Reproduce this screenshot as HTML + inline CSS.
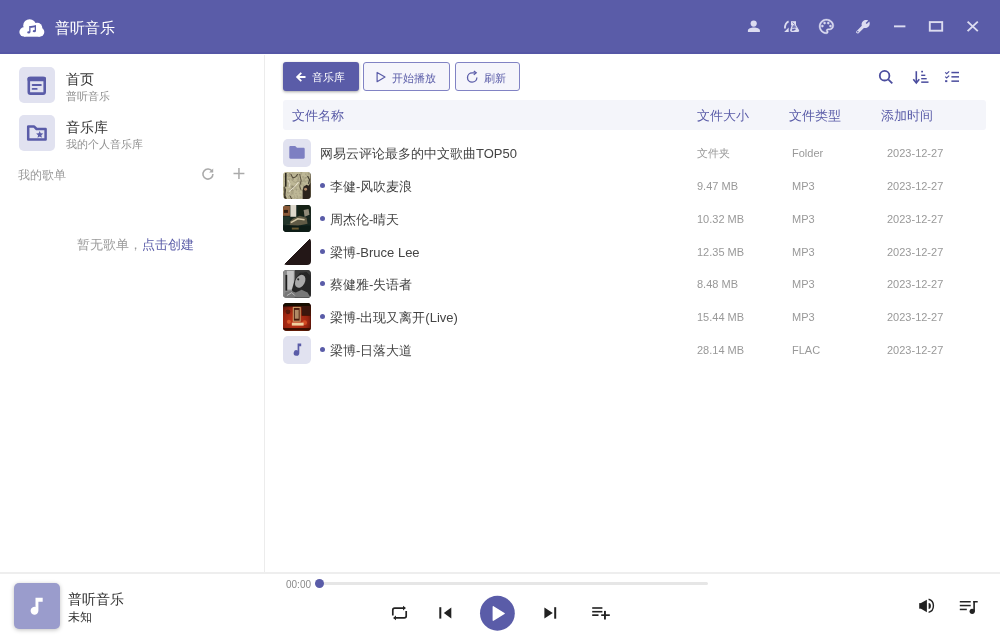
<!DOCTYPE html>
<html><head><meta charset="utf-8">
<style>
*{box-sizing:border-box;margin:0;padding:0}
.a,.th,.tt,.m,.btn{will-change:transform}
html,body{width:1000px;height:639px;overflow:hidden;background:#fff;font-family:"Liberation Sans",sans-serif;color:#333}
.a{position:absolute;white-space:nowrap}
#top{position:absolute;left:0;top:0;width:1000px;height:54px;background:#5a5ca8;box-shadow:inset 0 -2px 0 #5557a6}
#side{position:absolute;left:0;top:55px;width:265px;height:517px;border-right:1px solid #ececec}
#bar{position:absolute;left:0;top:572px;width:1000px;height:67px;border-top:2px solid #eeeeee;background:#fff}
.navbox{position:absolute;left:19px;width:36px;height:36px;border-radius:5px;background:#e1e2f0}
.btn{position:absolute;top:62px;height:29px;border-radius:3px;font-size:11px;line-height:30px}
.b1{left:283px;width:76px;background:#5a5ca8;color:#fff;box-shadow:0 1px 3px rgba(0,0,0,.35)}
.b2{border:1px solid #8183c4;background:#f5f5fb;color:#5a5ca8}
#thead{position:absolute;left:283px;top:100px;width:703px;height:30px;background:#f4f5fa;border-radius:3px}
.th{position:absolute;top:1px;line-height:30px;font-size:13px;color:#5a5ca8}
.row{position:absolute;left:283px;width:703px;height:33px}
.thumb{position:absolute;left:0;top:0;width:27.5px;height:27.5px;border-radius:4px;overflow:hidden}
.thumb svg{display:block;width:27.5px;height:27.5px}
.dot{position:absolute;left:37px;top:11px;width:5px;height:5px;border-radius:50%;background:#5a5ca8}
.tt{position:absolute;left:47px;top:1px;line-height:28px;font-size:13px;color:#444}
.m{position:absolute;top:0;line-height:28px;font-size:11px;color:#999}
.t1{background:linear-gradient(100deg,#b9b392 0%,#c9c3a6 35%,#a9a283 60%,#8a8068 75%,#3a3128 88%,#2a2420 100%)}
.t2{background:radial-gradient(circle at 30% 15%,#e6e0d0 0 15%,transparent 30%),radial-gradient(circle at 15% 20%,#b06a3a 0 12%,transparent 25%),linear-gradient(180deg,#2c3a33 0%,#1c2a24 50%,#101815 100%)}
.t3{background:linear-gradient(135deg,#fff 0 50%,#231717 50% 100%)}
.t4{background:linear-gradient(90deg,#c8c8c8 0%,#9a9a9a 25%,#3a3a3a 45%,#6b6b6b 60%,#2b2b2b 100%)}
.t5{background:radial-gradient(ellipse at 50% 40%,#d9b58a 0 10%,transparent 25%),radial-gradient(circle at 50% 60%,#b8301a 0 30%,#5a1208 60%,#1a0a06 100%)}
.t6{background:#e1e2f0;border-radius:5px}
#ov{position:absolute;left:0;top:0;width:1000px;height:639px;pointer-events:none}
</style></head><body>
<div id="top"><div class="a" style="left:55px;top:18px;font-size:14.6px;line-height:20px;color:#fff">普听音乐</div></div>
<div id="side">
  <div class="navbox" style="top:12px"></div>
  <div class="a" style="left:66px;top:14.5px;font-size:13.6px;line-height:20px;color:#333">首页</div>
  <div class="a" style="left:66px;top:33.5px;font-size:11px;line-height:14px;color:#8f8f8f">普听音乐</div>
  <div class="navbox" style="top:60px"></div>
  <div class="a" style="left:66px;top:62.5px;font-size:13.6px;line-height:20px;color:#333">音乐库</div>
  <div class="a" style="left:66px;top:81.5px;font-size:11px;line-height:14px;color:#8f8f8f">我的个人音乐库</div>
  <div class="a" style="left:18px;top:111.5px;font-size:12px;line-height:16px;color:#999">我的歌单</div>
  <div class="a" style="left:77px;top:181px;font-size:13px;line-height:17px;color:#999">暂无歌单，<span style="color:#5a5ca8">点击创建</span></div>
</div>
<div class="btn b1"><span class="a" style="left:29px;top:0">音乐库</span></div>
<div class="btn b2" style="left:363px;width:87px"><span class="a" style="left:28px;top:0">开始播放</span></div>
<div class="btn b2" style="left:455px;width:65px"><span class="a" style="left:28px;top:0">刷新</span></div>
<div id="thead">
  <div class="th" style="left:9px">文件名称</div>
  <div class="th" style="left:414px">文件大小</div>
  <div class="th" style="left:506px">文件类型</div>
  <div class="th" style="left:598px">添加时间</div>
</div>
<div class="row" style="top:139px">
  <div class="thumb" style="background:#e1e2f0;border-radius:5px"></div>
  <div class="tt" style="left:37px">网易云评论最多的中文歌曲TOP50</div>
  <div class="m" style="left:414px">文件夹</div>
  <div class="m" style="left:509px">Folder</div>
  <div class="m" style="left:604px">2023-12-27</div>
</div>
<div class="row" style="top:171.85px">
  <div class="thumb t1"><svg width="28" height="28" viewBox="0 0 28 28"><defs><filter id="f1"><feGaussianBlur stdDeviation="0.4"/></filter>
<filter id="n1" x="0" y="0" width="100%" height="100%"><feTurbulence type="fractalNoise" baseFrequency="0.35" numOctaves="2" seed="3"/><feColorMatrix values="0 0 0 0 0.15  0 0 0 0 0.13  0 0 0 0 0.08  0 0 0 -2.2 1.25"/></filter></defs>
<rect width="28" height="28" fill="#bdb796"/>
<rect width="28" height="28" filter="url(#n1)" opacity="0.55"/>
<g filter="url(#f1)">
<rect x="2" y="1" width="1.6" height="14" fill="#2a261c"/>
<path d="M1.5 14L3 18 2.5 24 4 28H1Z" fill="#3a3324"/>
<path d="M17 2L18.5 9 17 14 18 18" stroke="#5e5440" stroke-width="1" fill="none"/>
<path d="M8 2L10 6 13 5 15 2" stroke="#4a4232" stroke-width="1" fill="none"/>
<path d="M6 20L12 15 16 10" stroke="#efeada" stroke-width="0.9" fill="none"/>
<path d="M5 8L7 12 6 16" stroke="#e7e2d2" stroke-width="0.9" fill="none"/>
<path d="M7 24L9 28" stroke="#4a4232" stroke-width="1" fill="none"/>
<path d="M20 28V19L21 15 24 13 26 14 28 11V28Z" fill="#2a221d"/>
<circle cx="23" cy="17.5" r="1.5" fill="#b08868"/>
<path d="M25 4L27 8 26 12" stroke="#3f3a2e" stroke-width="1.2" fill="none"/>
</g></svg></div><div class="dot"></div>
  <div class="tt">李健-风吹麦浪</div>
  <div class="m" style="left:414px">9.47 MB</div>
  <div class="m" style="left:509px">MP3</div>
  <div class="m" style="left:604px">2023-12-27</div>
</div>
<div class="row" style="top:204.70px">
  <div class="thumb t2"><svg width="28" height="28" viewBox="0 0 28 28"><defs><filter id="f2"><feGaussianBlur stdDeviation="0.55"/></filter></defs>
<rect width="28" height="28" fill="#18261f"/><g filter="url(#f2)">
<rect x="0" y="1" width="7" height="10" fill="#8a5a38"/>
<rect x="1" y="5" width="4" height="3" fill="#2a1a10"/>
<rect x="7.5" y="0" width="6" height="12" fill="#ddd8cc"/>
<rect x="15" y="0" width="13" height="11" fill="#142019"/>
<path d="M21 5L26 4 27 10 22 12Z" fill="#8f8a78"/>
<path d="M3 20L10 14 17 11 24 13 25 19 15 21Z" fill="#5e5a44"/>
<path d="M8 18L15 14 22 15" stroke="#d4c8a8" stroke-width="1.6" fill="none"/>
<rect x="0" y="12" width="7" height="8" fill="#22352c"/>
<rect x="0" y="21" width="28" height="7" fill="#0f1d17"/>
<rect x="9" y="23" width="7" height="2" fill="#6a5a30"/>
</g></svg></div><div class="dot"></div>
  <div class="tt">周杰伦-晴天</div>
  <div class="m" style="left:414px">10.32 MB</div>
  <div class="m" style="left:509px">MP3</div>
  <div class="m" style="left:604px">2023-12-27</div>
</div>
<div class="row" style="top:237.55px">
  <div class="thumb t3"></div><div class="dot"></div>
  <div class="tt">梁博-Bruce Lee</div>
  <div class="m" style="left:414px">12.35 MB</div>
  <div class="m" style="left:509px">MP3</div>
  <div class="m" style="left:604px">2023-12-27</div>
</div>
<div class="row" style="top:270.40px">
  <div class="thumb t4"><svg width="28" height="28" viewBox="0 0 28 28"><defs><filter id="f4"><feGaussianBlur stdDeviation="0.6"/></filter></defs>
<rect width="28" height="28" fill="#3a3a3a"/><g filter="url(#f4)">
<rect x="0" y="0" width="12" height="28" fill="#8c8c8c"/>
<rect x="4" y="1" width="7" height="19" fill="#c4c4c4"/>
<rect x="2.5" y="5" width="1.8" height="16" fill="#1e1e1e"/>
<path d="M12 28L9 20 12 10 17 3 24 2 28 6V28Z" fill="#262626"/>
<ellipse cx="17.5" cy="11.5" rx="4.8" ry="7" fill="#a8a8a8" transform="rotate(28 17.5 11.5)"/>
<circle cx="15.5" cy="9.5" r="1.1" fill="#2a2a2a"/>
<path d="M2 23L8 21 13 23 19 20 25 23 28 28H1Z" fill="#777"/>
<path d="M4 26L9 23 12 26" stroke="#bdbdbd" stroke-width="1" fill="none"/>
</g></svg></div><div class="dot"></div>
  <div class="tt">蔡健雅-失语者</div>
  <div class="m" style="left:414px">8.48 MB</div>
  <div class="m" style="left:509px">MP3</div>
  <div class="m" style="left:604px">2023-12-27</div>
</div>
<div class="row" style="top:303.25px">
  <div class="thumb t5"><svg width="28" height="28" viewBox="0 0 28 28"><defs><filter id="f5"><feGaussianBlur stdDeviation="0.6"/></filter><radialGradient id="g5" cx="45%" cy="65%" r="75%"><stop offset="0" stop-color="#c8381a"/><stop offset="0.6" stop-color="#9a2410"/><stop offset="1" stop-color="#3a0e06"/></radialGradient></defs>
<rect width="28" height="28" fill="url(#g5)"/><g filter="url(#f5)">
<rect x="0" y="0" width="28" height="3.5" fill="#150806"/>
<rect x="19" y="3" width="9" height="10" fill="#3a1208"/>
<circle cx="5" cy="9" r="2.5" fill="#5a1a0c"/>
<circle cx="22" cy="20" r="2.5" fill="#d24a22"/>
<circle cx="6" cy="19" r="2" fill="#d8582a"/>
<rect x="10.5" y="4.5" width="7" height="14" fill="#4a1a0e" stroke="#c89a66" stroke-width="1.1"/>
<rect x="12" y="7" width="4" height="9" fill="#b08a66"/>
<rect x="9" y="20" width="12" height="3" fill="#f0d0a0"/>
<rect x="0" y="25.5" width="28" height="2.5" fill="#3a0f06"/>
</g></svg></div><div class="dot"></div>
  <div class="tt">梁博-出现又离开(Live)</div>
  <div class="m" style="left:414px">15.44 MB</div>
  <div class="m" style="left:509px">MP3</div>
  <div class="m" style="left:604px">2023-12-27</div>
</div>
<div class="row" style="top:336.10px">
  <div class="thumb t6"></div><div class="dot"></div>
  <div class="tt">梁博-日落大道</div>
  <div class="m" style="left:414px">28.14 MB</div>
  <div class="m" style="left:509px">FLAC</div>
  <div class="m" style="left:604px">2023-12-27</div>
</div>
<div id="bar">
  <div class="a" style="left:14px;top:9.3px;width:45.5px;height:45.5px;border-radius:5px;background:#9a9ccc;box-shadow:0 1px 4px rgba(0,0,0,.25)"></div>
  <div class="a" style="left:68px;top:15px;font-size:14px;line-height:20px;color:#333">普听音乐</div>
  <div class="a" style="left:68px;top:35px;font-size:12px;line-height:16px;color:#333">未知</div>
  <div class="a" style="left:286px;top:4px;font-size:10px;line-height:14px;color:#8a8a8a">00:00</div>
  <div class="a" style="left:316px;top:8px;width:392px;height:3px;border-radius:2px;background:#e6e6e6"></div>
  <div class="a" style="left:315px;top:5px;width:9.3px;height:9.3px;border-radius:50%;background:#5a5ca8"></div>
</div>
<svg id="ov" width="1000" height="639" viewBox="0 0 1000 639">
<!-- cloud logo -->
<g fill="#fff">
<circle cx="24" cy="31.9" r="4.6"/>
<circle cx="29.6" cy="25.6" r="6.4"/>
<circle cx="37.2" cy="27.9" r="5.1"/>
<circle cx="39.7" cy="32.1" r="4.6"/>
<rect x="24" y="29" width="15.7" height="7.7"/>
</g>
<g fill="#5a5ca8">
<path d="M29.2 26.2L36 25.2V27.1L30.5 27.9Z"/>
<rect x="29.2" y="26.2" width="1.3" height="6.2"/>
<rect x="34.7" y="25.5" width="1.3" height="5.6"/>
<ellipse cx="28.7" cy="32.4" rx="1.5" ry="1.15"/>
<ellipse cx="34.3" cy="31.2" rx="1.6" ry="1.15"/>
</g>
<!-- person -->
<circle cx="753.7" cy="23.6" r="3.1" fill="#dcdcf0"/>
<path d="M747.9 32V30.6C747.9 28.6 751 27.6 753.9 27.6S759.9 28.6 759.9 30.6V32Z" fill="#dcdcf0"/>
<!-- flask swap -->
<path d="M788.6 21.4C786.2 22.4 784.9 24.6 784.9 28.6" stroke="#dcdcf0" stroke-width="1.8" fill="none"/>
<path d="M788.7 27.6V31.9H784.2Z" fill="#dcdcf0"/>
<rect x="791" y="21.2" width="5" height="4.1" fill="#dcdcf0"/>
<path d="M792.6 22.4L794.6 24.6" stroke="#5a5ca8" stroke-width="0.8"/>
<path d="M791.8 25L790.2 29.8C789.8 31.2 790.5 31.9 791.8 31.9H797.6C798.9 31.9 799.5 31.1 799 29.9L796 25Z" fill="#dcdcf0"/>
<path d="M793 25.3L791.9 28.4C793.5 27.6 795 27.5 796.6 27.9L795 25.3Z" fill="#5a5ca8" opacity="0.75"/>
<ellipse cx="793.8" cy="29.6" rx="2.1" ry="0.9" transform="rotate(-15 793.8 29.6)" fill="#5a5ca8"/>
<!-- palette -->
<g transform="translate(817.6,17.6) scale(0.735)" fill="#dcdcf0" stroke="#dcdcf0" stroke-width="0.5">
<path d="M12 22C6.49 22 2 17.51 2 12S6.49 2 12 2s10 4.04 10 9c0 3.31-2.69 6-6 6h-1.77c-.28 0-.5.22-.5.5 0 .12.05.23.13.33.41.47.64 1.06.64 1.67 0 1.38-1.12 2.5-2.5 2.5zm0-18c-4.41 0-8 3.59-8 8s3.59 8 8 8c.28 0 .5-.22.5-.5 0-.16-.08-.28-.14-.35-.41-.46-.63-1.05-.63-1.65 0-1.38 1.12-2.5 2.5-2.5H16c2.21 0 4-1.79 4-4 0-3.86-3.59-7-8-7z"/>
<circle cx="6.5" cy="11.5" r="1.5"/><circle cx="9.5" cy="7.5" r="1.5"/><circle cx="14.5" cy="7.5" r="1.5"/><circle cx="17.5" cy="11.5" r="1.5"/>
</g>
<!-- wrench -->
<g transform="translate(856,19.2)">
<path d="M13.3 2.3L10.7 4.9 9.6 3.8 12.2 1.2C10.4 0.3 8.2 0.7 6.9 2.1 5.7 3.3 5.3 5 5.8 6.6L0.7 11.7C0 12.4 0 13.3 0.6 13.9 1.2 14.5 2.1 14.5 2.8 13.8L7.9 8.7C9.4 9.2 11.2 8.8 12.4 7.6 13.8 6.2 14.2 4.1 13.3 2.3Z" fill="#dcdcf0"/>
<circle cx="1.8" cy="12.6" r="0.8" fill="#5a5ca8"/>
</g>
<!-- min / max / close -->
<rect x="894" y="25.4" width="11.4" height="1.9" fill="#dcdcf0"/>
<rect x="929.8" y="22.1" width="12.4" height="8.6" stroke="#dcdcf0" stroke-width="1.9" fill="none"/>
<path d="M967.6 21.6L977.8 31.1M977.8 21.6L967.6 31.1" stroke="#dcdcf0" stroke-width="1.9"/>

<!-- button icons -->
<path d="M305.5 77H297.5M301.3 72.8L297.1 77L301.3 81.2" stroke="#fff" stroke-width="1.8" fill="none"/>
<path d="M377.1 72.5V81.7L385 77.1Z" stroke="#5a5ca8" stroke-width="1.2" fill="none" stroke-linejoin="round"/>
<path d="M476.9 77.6A4.7 4.7 0 1 1 472.3 72.8H474.8" stroke="#5a5ca8" stroke-width="1.3" fill="none"/>
<path d="M473.8 70.9L476.2 72.8L473.8 74.7" stroke="#5a5ca8" stroke-width="1.3" fill="none"/>

<!-- toolbar right -->
<circle cx="884.6" cy="75.7" r="4.8" stroke="#4b4d9e" stroke-width="1.8" fill="none"/>
<path d="M888.2 79.3L892.3 83.3" stroke="#4b4d9e" stroke-width="1.8"/>
<path d="M916.3 71.2V82" stroke="#4b4d9e" stroke-width="1.6"/>
<path d="M913.3 79.2L916.3 82.9L919.3 79.2" stroke="#4b4d9e" stroke-width="1.6" fill="none"/>
<rect x="921.2" y="70.8" width="1.8" height="1.6" fill="#4b4d9e"/>
<rect x="921.2" y="74.6" width="4.1" height="1.4" fill="#4b4d9e"/>
<rect x="921.2" y="78" width="5.5" height="1.4" fill="#4b4d9e"/>
<rect x="921.2" y="81.4" width="7.3" height="1.5" fill="#4b4d9e"/>
<path d="M945.2 72.4L946.7 73.7L949.2 71.4M945.2 76.6L946.7 77.9L949.2 75.6" stroke="#4b4d9e" stroke-width="1.2" fill="none"/>
<rect x="945.1" y="80.2" width="2.2" height="1.9" fill="#4b4d9e"/>
<rect x="951.4" y="71.8" width="7.6" height="1.5" fill="#4b4d9e"/>
<rect x="951.4" y="76.1" width="7.6" height="1.5" fill="#4b4d9e"/>
<rect x="951.4" y="80.4" width="7.6" height="1.5" fill="#4b4d9e"/>

<!-- sidebar icons -->
<rect x="28.8" y="78" width="15.9" height="15.6" rx="1.6" stroke="#5a5ca8" stroke-width="2.6" fill="none"/>
<rect x="27.5" y="76.7" width="18.5" height="4.6" rx="1.5" fill="#5a5ca8"/>
<rect x="31.7" y="83.9" width="10.1" height="2" rx="1" fill="#5a5ca8"/>
<rect x="31.7" y="87.9" width="5.9" height="1.9" rx="0.9" fill="#5a5ca8"/>
<path d="M28.2 126.6H34.2L36.6 129H45.6V139.5H28.2Z" stroke="#5a5ca8" stroke-width="2.5" fill="none" stroke-linejoin="round"/>
<path d="M39.7 131L40.7 133.3L43.3 133.5L41.3 135.2L41.9 137.7L39.7 136.4L37.5 137.7L38.1 135.2L36.1 133.5L38.7 133.3Z" fill="#5a5ca8"/>
<!-- 我的歌单 icons -->
<path d="M212.2 171.5A5 5 0 1 0 212.9 174" stroke="#aaa" stroke-width="1.6" fill="none"/>
<path d="M213.2 168.5V172.6H209.1Z" fill="#aaa"/>
<path d="M233.5 173.4H244.4M238.95 168V178.9" stroke="#aaa" stroke-width="1.5"/>

<!-- folder icon -->
<path d="M289.3 147.2C289.3 146.5 289.8 146 290.5 146H295.2L297 147.8H303.5C304.2 147.8 304.7 148.3 304.7 149V157.5C304.7 158.2 304.2 158.7 303.5 158.7H290.5C289.8 158.7 289.3 158.2 289.3 157.5Z" fill="#7d7fc2"/>
<!-- music note in last row -->
<path d="M297.6 343.5H301.2V346.3H299.3V353A2.8 2.8 0 1 1 297.6 350.4Z" fill="#5a5ca8"/>

<!-- bottom bar -->
<path d="M35.5 597.8H42.7V601.8H38.4V610.8A3.9 3.9 0 1 1 35.5 607Z" fill="#fff"/>
<!-- repeat -->
<path d="M392.8 615.5V610C392.8 608.9 393.6 608.1 394.7 608.1H403.2M406.2 611V616C406.2 617.1 405.4 617.9 404.3 617.9H395.8" stroke="#222" stroke-width="1.7" fill="none"/>
<path d="M403 605.8L406 608.1L403 610.4Z M396 615.6L393 617.9L396 620.2Z" fill="#222"/>
<!-- prev -->
<rect x="439.3" y="607.2" width="2" height="11.4" fill="#222"/>
<path d="M451.3 607.4V618.4L443.8 612.9Z" fill="#222"/>
<!-- play -->
<circle cx="497.4" cy="613.25" r="17.4" fill="#5a5ca8"/>
<path d="M492.6 606.8V620.3C492.6 620.9 493.1 621.1 493.6 620.8L504.5 614C505 613.7 505 613.2 504.5 612.9L493.6 606.2C493.1 605.9 492.6 606.1 492.6 606.8Z" fill="#fff"/>
<!-- next -->
<path d="M544.4 607.4V618.6L552.8 613Z" fill="#222"/>
<rect x="554.2" y="607.2" width="2" height="11.5" fill="#222"/>
<!-- queue add -->
<rect x="592.2" y="607.2" width="10.2" height="1.6" fill="#222"/>
<rect x="592.2" y="610.9" width="10.2" height="1.6" fill="#222"/>
<rect x="592.2" y="614.3" width="6.3" height="1.7" fill="#222"/>
<rect x="601.2" y="614.3" width="8.6" height="1.7" fill="#222"/>
<rect x="604" y="610.9" width="1.9" height="8.6" fill="#222"/>
<!-- volume -->
<rect x="919.2" y="603.1" width="2" height="5.6" fill="#222"/>
<path d="M921 603.1L926.9 599.8V612.2L921 608.8Z" fill="#222"/>
<path d="M928.6 603A2.3 3 0 0 1 928.6 609Z" fill="#222"/>
<path d="M928.6 599.3A6.1 6.7 0 0 1 928.6 612.4" stroke="#222" stroke-width="1.4" fill="none"/>
<!-- playlist -->
<rect x="959.8" y="601" width="10.9" height="1.5" fill="#222"/>
<rect x="959.8" y="604.8" width="10.9" height="1.5" fill="#222"/>
<rect x="959.8" y="608.7" width="7" height="1.5" fill="#222"/>
<rect x="973.3" y="601" width="1.6" height="10.5" fill="#222"/>
<rect x="973.3" y="601" width="4.4" height="1.5" fill="#222"/>
<circle cx="972.2" cy="611.3" r="2.6" fill="#222"/>
</svg>
</body></html>
